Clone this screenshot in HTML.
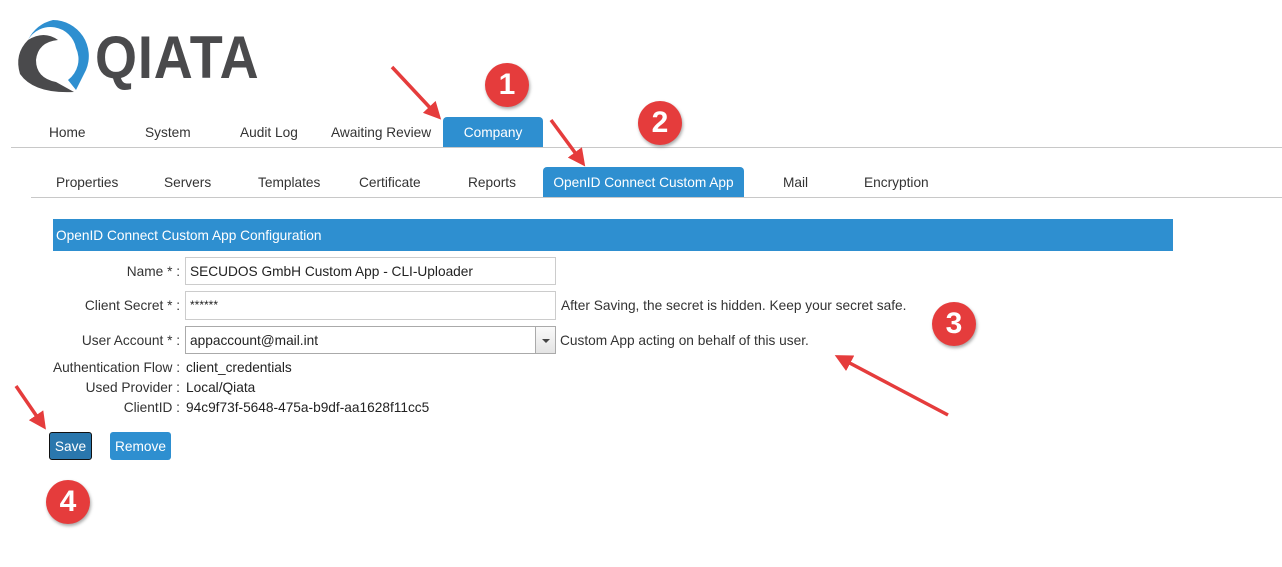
<!DOCTYPE html>
<html><head><meta charset="utf-8"><style>
body{margin:0;width:1282px;height:567px;background:#fff;position:relative;overflow:hidden;font-family:"Liberation Sans",Arial,sans-serif;font-size:13.7px;color:#333}
.a{position:absolute;white-space:nowrap}
.tab{position:absolute;color:#333;font-size:13.7px}
.act{position:absolute;background:#2e8fd0;color:#fff;border-radius:4px 4px 0 0;text-align:center;font-size:13.7px}
.lbl{position:absolute;right:1102px;text-align:right;white-space:nowrap}
.inp{position:absolute;left:185px;width:369px;height:27px;border:1px solid #ccc;box-sizing:border-box;padding-left:4px;line-height:27px;color:#222}
.circ{position:absolute;width:44px;height:44px;border-radius:50%;background:#e53c3c;color:#fff;font-size:30px;font-weight:bold;text-align:center;line-height:44px;box-shadow:1px 2px 3px rgba(0,0,0,.35)}
</style></head><body>
<svg class="a" style="left:14px;top:18px" width="78" height="78" viewBox="0 0 78 78">
<path d="M39 2 A36 36 0 0 1 72 52 L62 72 L54 62 A26 26 0 0 0 62 30 A26 26 0 0 0 14 22 Q22 6 39 2Z" fill="#2e8fd0"/>
<path d="M14 22 Q30 12 44 22 Q24 24 22 42 Q22 60 42 64 L60 74 Q20 76 6 56 Q0 36 14 22Z" fill="#4a4a4c"/>
</svg>
<div class="a" style="left:95px;top:23px;font-size:60px;font-weight:bold;color:#4a4a4c;transform:scaleX(0.9);transform-origin:left top;letter-spacing:1px">QIATA</div>

<div class="tab" style="left:49px;top:125px">Home</div>
<div class="tab" style="left:145px;top:125px">System</div>
<div class="tab" style="left:240px;top:125px">Audit Log</div>
<div class="tab" style="left:331px;top:125px">Awaiting Review</div>
<div class="act" style="left:443px;top:117px;width:100px;height:30px;line-height:31px">Company</div>
<div class="a" style="left:11px;top:147px;width:1271px;height:1px;background:#c8c8c8"></div>

<div class="tab" style="left:56px;top:175px">Properties</div>
<div class="tab" style="left:164px;top:175px">Servers</div>
<div class="tab" style="left:258px;top:175px">Templates</div>
<div class="tab" style="left:359px;top:175px">Certificate</div>
<div class="tab" style="left:468px;top:175px">Reports</div>
<div class="act" style="left:543px;top:167px;width:201px;height:30px;line-height:31px">OpenID Connect Custom App</div>
<div class="tab" style="left:783px;top:175px">Mail</div>
<div class="tab" style="left:864px;top:175px">Encryption</div>
<div class="a" style="left:31px;top:197px;width:1251px;height:1px;background:#c8c8c8"></div>

<div class="a" style="left:53px;top:219px;width:1120px;height:32px;background:#2e8fd0;color:#fff;line-height:33px;padding-left:3px;box-sizing:border-box">OpenID Connect Custom App Configuration</div>

<div class="lbl" style="top:264px">Name * :</div>
<div class="inp" style="top:257px;width:371px;height:28px">SECUDOS GmbH Custom App - CLI-Uploader</div>
<div class="lbl" style="top:298px">Client Secret * :</div>
<div class="inp" style="top:291px;width:371px;height:29px;font-size:12px">******</div>
<div class="a" style="left:561px;top:298px">After Saving, the secret is hidden. Keep your secret safe.</div>
<div class="lbl" style="top:333px">User Account * :</div>
<div class="inp" style="top:326px;width:351px;height:28px;border-color:#aaa">appaccount@mail.int</div>
<div class="a" style="left:535px;top:326px;width:21px;height:28px;border:1px solid #aaa;box-sizing:border-box;background:linear-gradient(#fafafa,#e4e4e4)"><div style="position:absolute;left:6px;top:12px;border-left:4px solid transparent;border-right:4px solid transparent;border-top:4px solid #444"></div></div>
<div class="a" style="left:560px;top:333px">Custom App acting on behalf of this user.</div>
<div class="lbl" style="top:360px">Authentication Flow :</div>
<div class="a" style="left:186px;top:360px;color:#222">client_credentials</div>
<div class="lbl" style="top:380px">Used Provider :</div>
<div class="a" style="left:186px;top:380px;color:#222">Local/Qiata</div>
<div class="lbl" style="top:400px">ClientID :</div>
<div class="a" style="left:186px;top:400px;color:#222">94c9f73f-5648-475a-b9df-aa1628f11cc5</div>

<div class="a" style="left:49px;top:432px;width:43px;height:28px;background:#2a77ad;border:1px solid #111;border-radius:3px;box-sizing:border-box;color:#fff;text-align:center;line-height:27px">Save</div>
<div class="a" style="left:110px;top:432px;width:61px;height:28px;background:#2e8fd0;border-radius:3px;color:#fff;text-align:center;line-height:29px">Remove</div>

<svg class="a" style="left:0;top:0" width="1282" height="567">
<defs><marker id="m" markerWidth="5" markerHeight="5" refX="2" refY="2.5" orient="auto"><path d="M0 0 L5 2.5 L0 5 Z" fill="#e53c3c"/></marker></defs>
<g stroke="#e53c3c" stroke-width="3.5" fill="none" marker-end="url(#m)">
<line x1="392" y1="67" x2="434" y2="112"/>
<line x1="551" y1="120" x2="579" y2="158"/>
<line x1="948" y1="415" x2="844" y2="360"/>
<line x1="16" y1="386" x2="40" y2="421"/>
</g></svg>
<div class="circ" style="left:485px;top:63px">1</div>
<div class="circ" style="left:638px;top:101px">2</div>
<div class="circ" style="left:932px;top:302px">3</div>
<div class="circ" style="left:46px;top:480px">4</div>
</body></html>
